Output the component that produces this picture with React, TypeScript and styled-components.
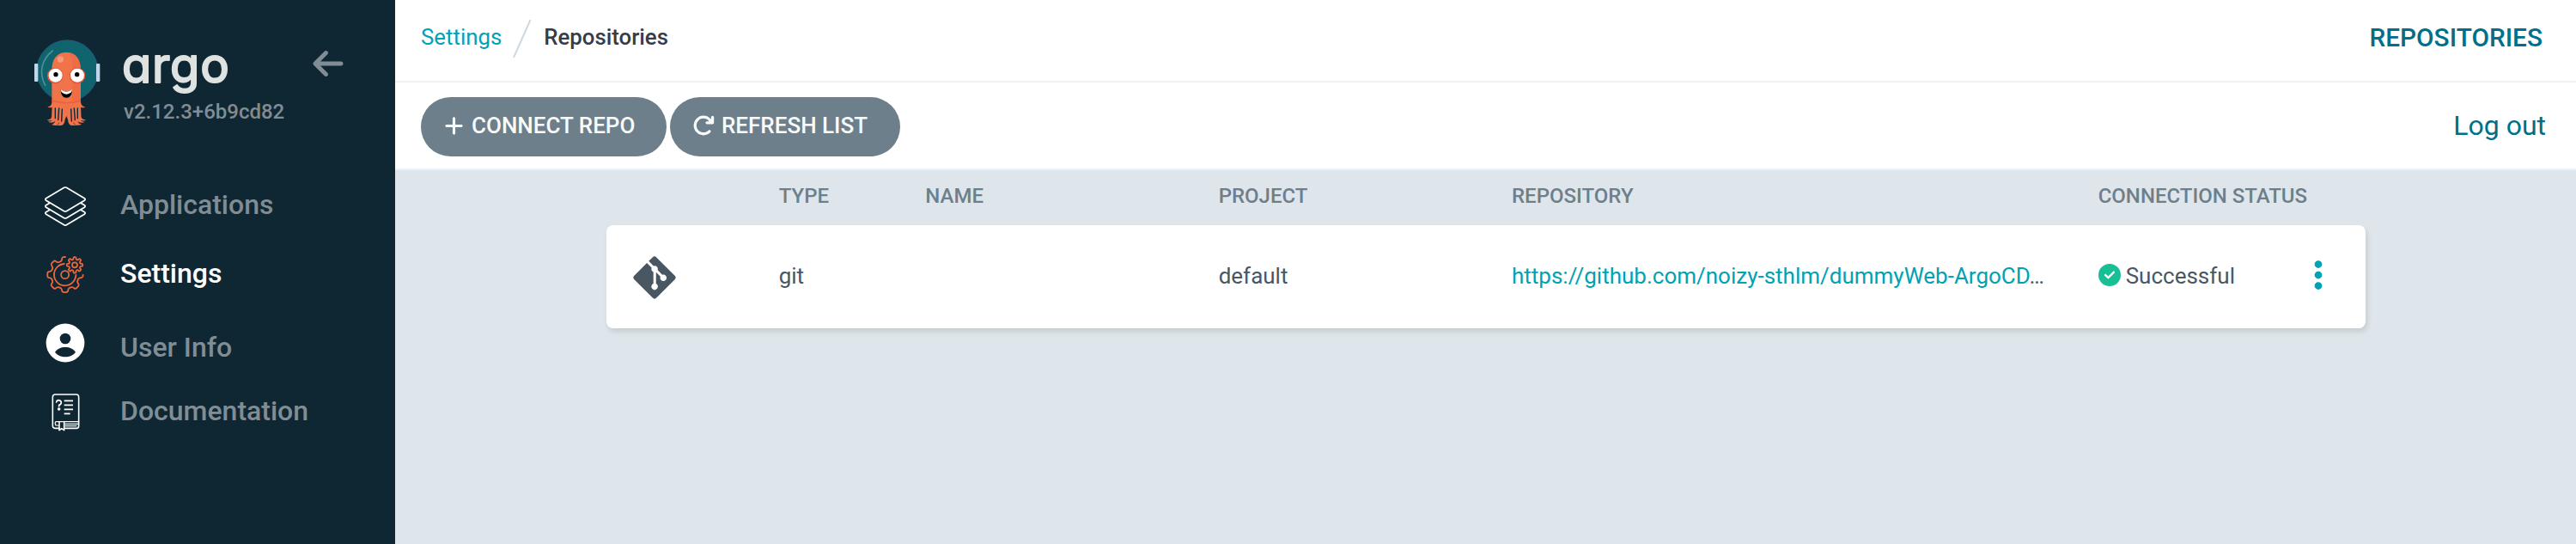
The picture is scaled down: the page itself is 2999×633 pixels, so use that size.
import React from 'react';
import styled, { createGlobalStyle } from 'styled-components';
import {
  FaArrowLeft,
  FaArrowRotateRight,
  FaCircleCheck,
  FaEllipsisVertical,
  FaGitAlt,
  FaPlus,
} from 'react-icons/fa6';

const GlobalStyle = createGlobalStyle`
  * { box-sizing: border-box; }
  body {
    margin: 0;
    font-family: Roboto, "Liberation Sans", sans-serif;
    font-size: 26px;
    line-height: 30px;
    color: #495763;
    background: #dee6eb;
  }
  svg { display: block; flex: none; }
`;

const Layout = styled.div`
  display: flex;
  height: 633px;
`;

/* ---------- sidebar ---------- */

const Sidebar = styled.nav`
  flex: none;
  width: 460px;
  background: #0f2733;
  color: #818d94;
`;

const Brand = styled.div`
  display: flex;
  align-items: flex-start;
  height: 217px;
  padding: 35px 58px 0 30px;
`;

const BrandText = styled.div`
  flex: 1;
  padding: 21px 0 0 14px;
`;

const Wordmark = styled.svg`
  overflow: visible;
`;

const WordmarkText = styled.text`
  font-family: Inter, sans-serif;
  font-size: 56px;
  font-weight: 400;
  font-feature-settings: "cv11" 1;
  letter-spacing: 0.8px;
  fill: #dee2e1;
  stroke: #dee2e1;
  stroke-width: 2px;
  stroke-linejoin: round;
`;

const Version = styled.div`
  font-size: 24px;
  font-weight: 500;
  line-height: 28px;
  white-space: nowrap;
`;

const Collapse = styled.div`
  padding-top: 19px;
  font-size: 40px;
`;

const NavItem = styled.a<{ $height: number; $active?: boolean }>`
  display: flex;
  align-items: flex-start;
  gap: 40px;
  height: ${(p) => p.$height}px;
  padding-left: 52px;
  color: ${(p) => (p.$active ? '#fff' : '#818d94')};
`;

const NavIcon = styled.span`
  display: flex;
  justify-content: center;
  width: 48px;
`;

const NavLabel = styled.span<{ $drop: number }>`
  margin-top: ${(p) => p.$drop}px;
  font-size: 32px;
  font-weight: 500;
  line-height: 38px;
`;

/* ---------- main ---------- */

const Main = styled.main`
  flex: 1;
  min-width: 0;
`;

const TopBar = styled.header`
  display: flex;
  align-items: flex-start;
  justify-content: space-between;
  height: 96px;
  padding: 23px 39px 0 30px;
  background: #fff;
  border-bottom: 2px solid #edf2f6;
`;

const Toolbar = styled(TopBar).attrs({ as: 'div' })`
  height: 102px;
  padding: 17px 35px 0 30px;
`;

const Breadcrumbs = styled.div`
  display: flex;
  align-items: flex-start;
`;

const Crumb = styled.span<{ $current?: boolean }>`
  padding-top: 5px;
  font-size: 25.8px;
  color: ${(p) => (p.$current ? '#363c4a' : '#00a2b3')};
  font-weight: ${(p) => (p.$current ? 500 : 400)};
`;

const Slash = styled.svg`
  margin: 0 14px 0 13px;
`;

const PageTitle = styled.div`
  padding-top: 3px;
  font-size: 29.8px;
  font-weight: 500;
  line-height: 36px;
  color: #006f8a;
`;

const Actions = styled.div`
  display: flex;
  gap: 4px;
`;

const ActionButton = styled.button<{ $width: number }>`
  display: flex;
  align-items: center;
  gap: 8px;
  width: ${(p) => p.$width}px;
  height: 69px;
  padding: 0 0 3px 26px;
  border: 0;
  border-radius: 35px;
  background: #6d7f8b;
  color: #f8fbfb;
  font: 500 26px/30px Roboto, sans-serif;
  white-space: nowrap;
`;

const LogOut = styled.a`
  padding-top: 14px;
  font-size: 32px;
  line-height: 38px;
  color: #006f8a;
`;

const Table = styled.section`
  width: 2048px;
  margin-left: 246px;
`;

const GridRow = styled.div`
  display: grid;
  grid-template-columns: 1fr 1fr 2fr 2fr 4fr 2fr;
`;

const HeadRow = styled(GridRow)`
  height: 64px;
  padding-top: 16px;
  font-size: 24px;
  font-weight: 500;
  line-height: 28px;
  color: #6d7f8b;
`;

const Card = styled(GridRow)`
  align-items: center;
  height: 120px;
  padding-bottom: 2px;
  background: #fff;
  border-radius: 8px;
  box-shadow: 2px 4px 6px rgba(0, 0, 0, 0.11);
`;

const Cell = styled.div`
  padding-left: 30px;
  white-space: nowrap;
`;

const IconCell = styled(Cell)`
  padding: 4px 0 0 28px;
  font-size: 56px;
`;

const RepoLink = styled.a`
  color: #00a2b3;
`;

const StatusCell = styled(Cell)`
  display: flex;
  align-items: center;
  justify-content: space-between;
  padding-right: 35px;
`;

const Status = styled.span`
  display: flex;
  align-items: center;
  gap: 6px;
  svg { color: #18be94; margin-top: -3px; }
`;

const Menu = styled.span`
  margin-top: -2px;
  font-size: 40px;
  color: #00a2b3;
`;

/* ---------- drawings ---------- */

const Octopus = () => (
  <svg width="100" height="120" viewBox="0 0 300 360">
    <circle cx="145" cy="142" r="106" fill="#0f646d" stroke="#1f5b78" strokeWidth="4" />
    <rect x="30" y="117" width="13" height="63" rx="3" fill="#c0d6eb" />
    <rect x="246" y="117" width="13" height="63" rx="3" fill="#c0d6eb" />
    <path d="M94 72C52 106 46 150 68 193" fill="none" stroke="#4c8f95" strokeWidth="5" strokeLinecap="round" />
    <path
      d="M91 140C91 100 110 78 141 78S192 100 192 140V250C193 262 199 267 208 269C203 272 196 271 192 269C194 290 192 303 196 308C200 312 207 311 210 314C204 317 198 317 192 315C196 320 202 320 207 320C199 325 187 324 181 318C184 326 190 328 195 329C186 334 176 332 169 326L167 321C165 329 172 331 187 333H160C151 331 148 324 147 312L142 300L137 312C136 325 132 331 124 333H97C111 331 119 329 117 321L115 326C108 332 99 334 90 330C96 328 101 325 103 318C96 324 85 325 78 320C84 320 89 319 92 315C86 317 79 317 74 314C79 311 85 312 88 308C92 303 90 290 92 269C88 271 81 272 76 268C86 267 91 262 91 250Z"
      fill="#f1734a"
    />
    <path d="M150 78C178 82 192 103 192 140V250H163V130C163 105 160 88 150 78Z" fill="#ee6843" opacity=".65" />
    <path d="M91 243Q142 262 192 243V249Q142 264 91 249Z" fill="#e9623f" />
    <path
      d="M103 273V308M116 273L113 314M127 276L125 318M158 276L160 318M169 273L172 314M181 273V308"
      stroke="#0f2733"
      strokeWidth="4.2"
      strokeLinecap="round"
    />
    <circle cx="121" cy="102" r="11" fill="#f79a7c" />
    <circle cx="103" cy="159" r="28" fill="#e7573c" />
    <circle cx="180" cy="159" r="28" fill="#e7573c" />
    <circle cx="104" cy="158" r="24" fill="#fff" />
    <circle cx="180" cy="158" r="24" fill="#fff" />
    <circle cx="105" cy="155" r="8" />
    <circle cx="179" cy="155" r="8" />
    <path d="M122 206Q142 225 162 206C162 226 154 236 142 236S122 226 122 206Z" />
    <path d="M122 206Q142 225 162 206Q161 213 159 217Q142 231 125 217Q123 213 122 206Z" fill="#fff" />
  </svg>
);

const LayersIcon = () => (
  <svg width="48" height="46" viewBox="96 80 144 138" fill="none" stroke="#fff" strokeWidth="5.2" strokeLinejoin="round">
    <path d="M164 84Q168 82 172 84L235 121Q240 125 235 129L172 166Q168 169 164 166L101 129Q96 125 101 121Z" />
    <path d="M115 137L101 145Q96 149 101 153L164 190Q168 193 172 190L235 153Q240 149 235 145L221 137" />
    <path d="M115 161L101 169Q96 173 101 177L164 214Q168 217 172 214L235 177Q240 173 235 169L221 161" />
  </svg>
);

type Point = [number, number];

// Points of a cog outline, one tooth every 45 degrees.
const cog = (cx: number, cy: number, inner: number, outer: number, from: number, to: number): Point[] => {
  const out: Point[] = [];
  for (let a = from; a <= to; a += 45) {
    [[-14, inner], [-9, outer], [9, outer], [14, inner]].forEach(([d, r]) => {
      const t = ((a + d) * Math.PI) / 180;
      out.push([cx + r * Math.cos(t), cy + r * Math.sin(t)]);
    });
  }
  return out;
};

// Joins the points with lines and rounds each corner with a short curve.
const smooth = (pts: Point[], closed: boolean) => {
  const near = (a: Point, b: Point, k: number) =>
    `${(a[0] + (b[0] - a[0]) * k).toFixed(1)} ${(a[1] + (b[1] - a[1]) * k).toFixed(1)}`;
  const n = pts.length;
  let d = closed ? `M${near(pts[0], pts[n - 1], 0.35)}` : `M${near(pts[0], pts[0], 0)}`;
  const start = closed ? 0 : 1;
  const end = closed ? n : n - 1;
  for (let i = start; i < end; i++) {
    const p = pts[i];
    d += `L${near(p, pts[(i + n - 1) % n], 0.35)}Q${near(p, p, 0)} ${near(p, pts[(i + 1) % n], 0.35)}`;
  }
  return closed ? `${d}Z` : `${d}L${near(pts[n - 1], pts[n - 1], 0)}`;
};

const bigCog: Point[] = cog(93, 90, 49, 62, 0, 270).slice(2, -2);

const GearsIcon = () => (
  <svg
    width="44"
    height="44"
    viewBox="28 25 132 132"
    fill="none"
    stroke="#f0663b"
    strokeWidth="5.4"
    strokeLinecap="round"
    strokeLinejoin="round"
  >
    <path d={smooth([[156, 91], ...bigCog, [94, 28]], false)} />
    <path d="M90 52A38 38 0 1 0 131 91" />
    <circle cx="93" cy="90" r="13.5" />
    <path d={smooth(cog(127, 56, 20, 28, 0, 315), true)} />
    <circle cx="127" cy="56" r="9" />
  </svg>
);

const UserIcon = () => (
  <svg width="46" height="46" viewBox="0 0 46 46">
    <circle cx="23" cy="23" r="22.4" fill="#fff" />
    <circle cx="23" cy="18" r="6.3" fill="#0f2733" />
    <path d="M11 33.8C13.5 29.8 18 28 23 28S32.5 29.8 35 33.8C32.5 37.5 28 39.3 23 39.3S13.5 37.5 11 33.8Z" fill="#0f2733" />
  </svg>
);

const BookIcon = () => (
  <svg
    width="33"
    height="44"
    viewBox="121 804 99 132"
    fill="none"
    stroke="#fff"
    strokeWidth="4.8"
    strokeLinecap="round"
    strokeLinejoin="round"
  >
    <path d="M147 925H133Q125 925 125 916V816Q125 807 134 807H208Q216 807 216 816V917Q216 925 208 925H167" />
    <path d="M165 829H196M165 844H196M165 859H196M165 874H186" strokeLinecap="butt" />
    <path d="M138 834Q139 827 146 827Q155 828 155 836Q154 843 147 844V849" strokeWidth="5" />
    <circle cx="147" cy="858" r="3" fill="#fff" />
    <path d="M216 902H136Q131 905 136 915H146M168 910H214M168 917H208" strokeWidth="3.5" />
    <path d="M148 904V932L156 926L165 932V904" />
  </svg>
);

const nav = [
  { label: 'Applications', icon: <LayersIcon />, height: 81, drop: 2 },
  { label: 'Settings', icon: <GearsIcon />, height: 78, drop: 1, active: true },
  { label: 'User Info', icon: <UserIcon />, height: 82, drop: 9 },
  { label: 'Documentation', icon: <BookIcon />, height: 60, drop: 1 },
];

export default function App() {
  return (
    <Layout>
      <GlobalStyle />
      <Sidebar>
        <Brand>
          <Octopus />
          <BrandText>
            <Wordmark width="121" height="60" viewBox="0 0 121 60">
              <WordmarkText x="-2" y="39.5">argo</WordmarkText>
            </Wordmark>
            <Version>v2.12.3+6b9cd82</Version>
          </BrandText>
          <Collapse>
            <FaArrowLeft />
          </Collapse>
        </Brand>
        {nav.map((n) => (
          <NavItem key={n.label} $height={n.height} $active={n.active}>
            <NavIcon>{n.icon}</NavIcon>
            <NavLabel $drop={n.drop}>{n.label}</NavLabel>
          </NavItem>
        ))}
      </Sidebar>
      <Main>
        <TopBar>
          <Breadcrumbs>
            <Crumb>Settings</Crumb>
            <Slash width="22" height="44" viewBox="0 0 22 44">
              <path d="M1 44L20.5 0" stroke="#ced8e0" strokeWidth="2" />
            </Slash>
            <Crumb $current>Repositories</Crumb>
          </Breadcrumbs>
          <PageTitle>REPOSITORIES</PageTitle>
        </TopBar>
        <Toolbar>
          <Actions>
            <ActionButton $width={286}>
              <FaPlus size={25} />
              CONNECT REPO
            </ActionButton>
            <ActionButton $width={268}>
              <FaArrowRotateRight size={26} />
              REFRESH LIST
            </ActionButton>
          </Actions>
          <LogOut>Log out</LogOut>
        </Toolbar>
        <Table>
          <HeadRow>
            <Cell />
            <Cell>TYPE</Cell>
            <Cell>NAME</Cell>
            <Cell>PROJECT</Cell>
            <Cell>REPOSITORY</Cell>
            <Cell>CONNECTION STATUS</Cell>
          </HeadRow>
          <Card>
            <IconCell>
              <FaGitAlt />
            </IconCell>
            <Cell>git</Cell>
            <Cell />
            <Cell>default</Cell>
            <Cell>
              <RepoLink>https://github.com/noizy-sthlm/dummyWeb-ArgoCD</RepoLink>…
            </Cell>
            <StatusCell>
              <Status>
                <FaCircleCheck />
                Successful
              </Status>
              <Menu>
                <FaEllipsisVertical />
              </Menu>
            </StatusCell>
          </Card>
        </Table>
      </Main>
    </Layout>
  );
}
